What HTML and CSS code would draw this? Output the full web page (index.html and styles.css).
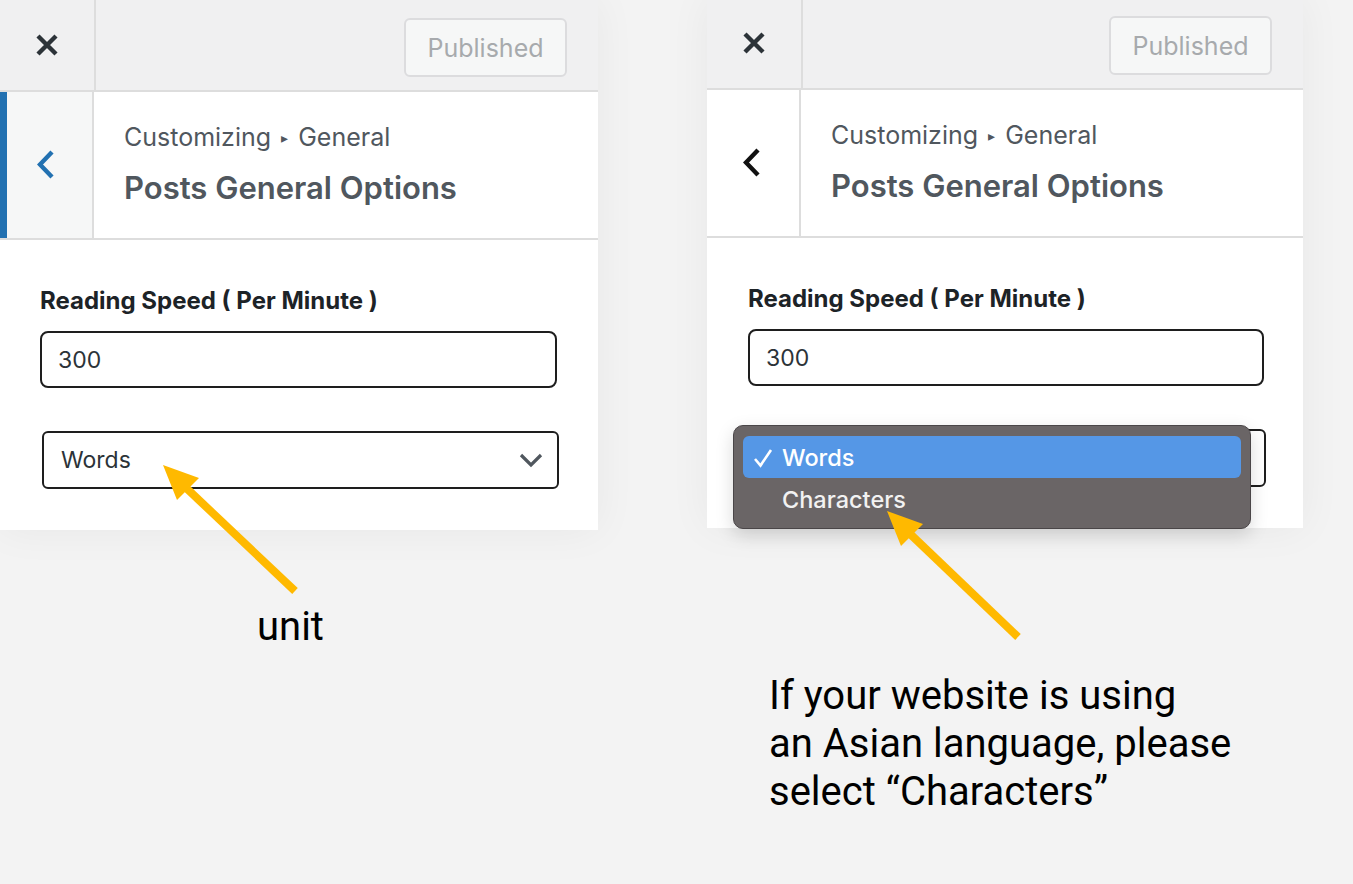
FILE: index.html
```html
<!doctype html>
<html lang="en">
    <head>
        <meta charset="UTF-8" />
        <meta name="viewport" content="width=device-width, initial-scale=1.0" />
        <title>Reading Speed Unit</title>
        <link rel="stylesheet" href="styles.css">
    </head>
    <body>
        <div class="stage">
            <!-- Left: closed select -->
            <div class="column column-left">
                <div class="panel">
                    <div class="panel-header">
                        <div class="close-btn">
                            <svg width="24" height="24" viewBox="0 0 24 24"><path d="M3 3 L21 21 M21 3 L3 21" stroke="#2c3338" stroke-width="4.4" fill="none"/></svg>
                        </div>
                        <div class="header-actions">
                            <button class="publish-btn">Published</button>
                        </div>
                    </div>
                    <div class="section-title">
                        <div class="back-btn back-btn-active">
                            <svg width="20" height="30" viewBox="0 0 20 30"><path d="M15 2 L3 14.5 L15 27" stroke="#2271b1" stroke-width="4.4" fill="none"/></svg>
                        </div>
                        <div class="title-text">
                            <div class="crumb">Customizing <span class="crumb-sep">&#9656;</span> General</div>
                            <h3>Posts General Options</h3>
                        </div>
                    </div>
                    <div class="panel-content">
                        <label class="field-label">Reading Speed ( Per Minute )</label>
                        <div class="text-input">300</div>
                        <div class="select-box">
                            <span>Words</span>
                            <svg width="24" height="16" viewBox="0 0 24 16"><path d="M2 3 L12 13 L22 3" stroke="#50575e" stroke-width="3.2" fill="none"/></svg>
                        </div>
                    </div>
                </div>
                <p class="note note-unit">unit</p>
            </div>

            <!-- Right: open select -->
            <div class="column column-right">
                <div class="panel panel-shifted">
                    <div class="panel-header">
                        <div class="close-btn">
                            <svg width="24" height="24" viewBox="0 0 24 24"><path d="M3 3 L21 21 M21 3 L3 21" stroke="#2c3338" stroke-width="4.4" fill="none"/></svg>
                        </div>
                        <div class="header-actions">
                            <button class="publish-btn">Published</button>
                        </div>
                    </div>
                    <div class="section-title">
                        <div class="back-btn">
                            <svg width="20" height="30" viewBox="0 0 20 30"><path d="M15 2 L3 14.5 L15 27" stroke="#111" stroke-width="4.4" fill="none"/></svg>
                        </div>
                        <div class="title-text">
                            <div class="crumb">Customizing <span class="crumb-sep">&#9656;</span> General</div>
                            <h3>Posts General Options</h3>
                        </div>
                    </div>
                    <div class="panel-content">
                        <label class="field-label">Reading Speed ( Per Minute )</label>
                        <div class="text-input">300</div>
                        <div class="select-wrap">
                            <!-- closed box sits under the open menu -->
                            <div class="select-box"></div>
                            <ul class="select-menu">
                                <li class="option option-selected">
                                    <svg class="check" width="20" height="20" viewBox="0 0 20 20"><path d="M2 11 L7.5 17.5 L18 2" stroke="white" stroke-width="2.6" fill="none"/></svg>
                                    Words
                                </li>
                                <li class="option">Characters</li>
                            </ul>
                        </div>
                    </div>
                </div>
                <p class="note note-chars">If your website is using<br>an Asian language, please<br>select &ldquo;Characters&rdquo;</p>
            </div>

            <!-- Annotation arrows -->
            <svg class="arrows" width="1353" height="884" viewBox="0 0 1353 884">
                <line x1="295" y1="591" x2="182" y2="484" stroke="#ffb900" stroke-width="8"/>
                <polygon points="163,465 199,478 177,500" fill="#ffb900"/>
                <line x1="1018" y1="637" x2="906" y2="530" stroke="#ffb900" stroke-width="8"/>
                <polygon points="887,511 923,524 901,546" fill="#ffb900"/>
            </svg>
        </div>
    </body>
</html>
```

FILE: styles.css
```css
/* General Styles */
body {
    margin: 0;
    padding: 0;
    background-color: #f3f3f3;
    font-family: Inter, "Open Sans", sans-serif;
}

.stage {
    position: relative;
    display: flex;
    gap: 109px;
    width: 1353px;
    height: 884px;
    overflow: hidden;
}

.column {
    display: flex;
    flex-direction: column;
}

/* Panel */
.panel {
    width: 598px;
    background-color: white;
    box-shadow: 0 0 40px rgba(0, 0, 0, 0.05);
}

.panel-shifted {
    width: 596px;
    margin-top: -2px;
}

.panel-header {
    display: flex;
    height: 90px;
    background-color: #f0f0f1;
    border-bottom: 2px solid #dddddd;
}

.close-btn {
    width: 94px;
    border-right: 2px solid #dddddd;
    display: flex;
    justify-content: center;
    align-items: center;
}

.header-actions {
    flex: 1;
    display: flex;
    justify-content: flex-end;
    padding: 18px 31px 0 0;
}

.publish-btn {
    width: 163px;
    height: 59px;
    background-color: #f6f7f7;
    border: 2px solid #dcdcde;
    border-radius: 6px;
    color: #a7aaad;
    font-family: inherit;
    font-size: 25px;
}

/* Section title */
.section-title {
    display: flex;
    height: 146px;
    border-bottom: 2px solid #dddddd;
}

.back-btn {
    width: 94px;
    border-right: 2px solid #dddddd;
    display: flex;
    justify-content: center;
    align-items: center;
    box-sizing: border-box;
}

.back-btn-active {
    background-color: #f6f7f7;
    border-left: 7px solid #2271b1;
    padding-right: 6px;
}

.title-text {
    padding: 30px 0 0 30px;
    color: #50575e;
}

.crumb {
    font-size: 25px;
    line-height: 30px;
}

.crumb-sep {
    font-size: 14px;
    vertical-align: 3px;
    margin: 0 3px;
}

.title-text h3 {
    margin: 18px 0 0;
    font-size: 31px;
    line-height: 34px;
    font-weight: 600;
}

/* Content */
.panel-content {
    padding: 46px 41px 41px 40px;
}

.panel-shifted .panel-content {
    padding-left: 41px;
    padding-right: 39px;
}

.field-label {
    display: block;
    font-size: 24px;
    line-height: 30px;
    font-weight: 700;
    color: #1d2327;
}

.text-input {
    margin-top: 15px;
    height: 57px;
    box-sizing: border-box;
    border: 2px solid #1e1e1e;
    border-radius: 8px;
    padding: 0 16px;
    display: flex;
    align-items: center;
    font-size: 23px;
    color: #2c3338;
}

.select-wrap {
    position: relative;
}

.select-box {
    margin: 43px -2px 0 2px;
    height: 58px;
    box-sizing: border-box;
    border: 2px solid #1e1e1e;
    border-radius: 6px;
    padding: 0 14px 0 17px;
    display: flex;
    justify-content: space-between;
    align-items: center;
    font-size: 23px;
    color: #2c3338;
}

/* Open dropdown menu */
.select-menu {
    position: absolute;
    top: -4px;
    left: -15px;
    width: 518px;
    height: 104px;
    box-sizing: border-box;
    margin: 0;
    padding: 10px 9px;
    list-style: none;
    background-color: #6a6566;
    border: 1px solid #4a4648;
    border-radius: 10px;
    box-shadow: 0 6px 18px rgba(0, 0, 0, 0.15);
}

.option {
    position: relative;
    height: 42px;
    padding-left: 39px;
    border-radius: 6px;
    display: flex;
    align-items: center;
    font-size: 23.5px;
    font-weight: 500;
    color: #f2f2f2;
}

.option-selected {
    background-color: #5597e6;
    color: white;
}

.check {
    position: absolute;
    left: 10px;
    top: 12px;
}

/* Annotations */
.note {
    margin: 0;
    font-family: Roboto, sans-serif;
    font-size: 40px;
    line-height: 48px;
    color: black;
}

.note-unit {
    margin: 73px 0 0 257px;
}

.note-chars {
    margin: 144px 0 0 62px;
}

.arrows {
    position: absolute;
    top: 0;
    left: 0;
    pointer-events: none;
}
```
